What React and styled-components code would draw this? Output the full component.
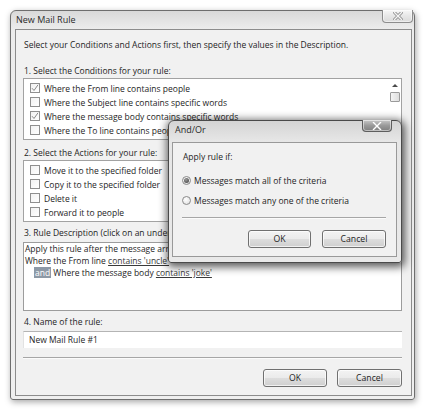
import React from 'react';
import styled, { createGlobalStyle } from 'styled-components';

const GlobalStyle = createGlobalStyle`
  body {
    margin: 0;
    background: #ffffff;
    font-family: "Open Sans", "Noto Sans", sans-serif;
    color: #1e1e1e;
  }
`;

const Desktop = styled.div`
  position: relative;
  width: 427px;
  height: 411px;
  padding: 10px 0 0 10px;
  box-sizing: border-box;
  overflow: hidden;
  font-size: 8.5px;
`;

const Window = styled.div`
  width: 405px;
  height: 390px;
  box-sizing: border-box;
  display: flex;
  flex-direction: column;
  padding: 0 2px 3px 4px;
  border: 1px solid #6e6e6e;
  border-radius: 6px 6px 3px 3px;
  background: linear-gradient(180deg, #d9d9d9 0%, #ececec 18px, #efefef 100%);
  box-shadow: 1px 2px 6px rgba(0, 0, 0, 0.35);
`;

const TitleBar = styled.div`
  height: 18px;
  display: flex;
  justify-content: space-between;
  align-items: flex-start;
`;

const Title = styled.span`
  font-size: 9px;
  line-height: 18px;
  padding-left: ${(p) => p.$indent || 1}px;
  color: #2a2a2a;
`;

const CloseButton = styled.div`
  width: ${(p) => (p.$dark ? 30 : 31)}px;
  height: ${(p) => (p.$dark ? 12 : 13)}px;
  margin-top: -1px;
  margin-right: ${(p) => (p.$dark ? 5 : -1)}px;
  box-sizing: border-box;
  display: flex;
  align-items: center;
  justify-content: center;
  border: 1px solid ${(p) => (p.$dark ? '#5e5e5e' : '#8d8d8d')};
  border-top: none;
  border-radius: 0 0 4px 4px;
  background: ${(p) =>
    p.$dark
      ? 'linear-gradient(180deg, #c9c9c9 0%, #9a9a9a 50%, #7f7f7f 100%)'
      : 'linear-gradient(180deg, #f7f7f7 0%, #e7e7e7 50%, #dadada 100%)'};
  box-shadow: inset 0 0 0 1px rgba(255, 255, 255, 0.5);
`;

const Client = styled.div`
  flex: 1;
  display: flex;
  flex-direction: column;
  padding: 8px 9px 0 7px;
  border: 1px solid #8c8c8c;
  background: #f1f1f1;
`;

const Text = styled.div`
  line-height: 14px;
  height: 14px;
  white-space: nowrap;
  margin-top: ${(p) => p.$top || 0}px;
  padding-left: 1px;
`;

const ListBox = styled.div`
  height: 62px;
  margin-top: ${(p) => p.$top || 0}px;
  box-sizing: border-box;
  display: flex;
  border: 1px solid #a2a2a2;
  background: #ffffff;
`;

const Items = styled.div`
  flex: 1;
  padding: 2px 0 0 6px;
  overflow: hidden;
`;

const Row = styled.div`
  height: 14px;
  display: flex;
  align-items: center;
  gap: 4px;
  white-space: nowrap;
`;

const Box = styled.span`
  width: 10px;
  height: 10px;
  box-sizing: border-box;
  flex: none;
  display: flex;
  align-items: center;
  justify-content: center;
  border: 1px solid #8f8f8f;
  background: linear-gradient(135deg, #f2f2f2, #ffffff);
`;

const ScrollBar = styled.div`
  width: 13px;
  display: flex;
  flex-direction: column;
  align-items: center;
  padding-top: 5px;
`;

const UpArrow = styled.span`
  width: 0;
  height: 0;
  border-left: 3px solid transparent;
  border-right: 3px solid transparent;
  border-bottom: 3px solid #4a4a4a;
`;

const Thumb = styled.span`
  width: 10px;
  height: 10px;
  margin-top: 5px;
  box-sizing: border-box;
  border: 1px solid #9a9a9a;
  border-radius: 1px;
  background: linear-gradient(90deg, #f4f4f4, #dedede);
`;

const Description = styled.div`
  height: 69px;
  margin-top: 2px;
  box-sizing: border-box;
  border: 1px solid #9c9c9c;
  background: #ffffff;
  padding: 0 0 0 1px;
`;

const DescLine = styled.div`
  line-height: 12px;
  white-space: nowrap;
  padding-left: ${(p) => p.$indent || 0}px;
`;

const Link = styled.span`
  text-decoration: underline;
  color: #3a3a3a;
`;

const Selected = styled.span`
  background: #8d99a6;
  color: #ffffff;
  padding: 0 1px;
`;

const NameField = styled.div`
  height: 17px;
  margin-top: 2px;
  box-sizing: border-box;
  padding-left: 5px;
  line-height: 16px;
  border-top: 1px solid #b4b4b4;
  border-left: 1px solid #e2e2e2;
  background: #ffffff;
`;

const Separator = styled.div`
  margin-top: ${(p) => p.$top || 0}px;
  border-top: 1px solid #a6a6a6;
  border-bottom: 1px solid #fbfbfb;
`;

const ButtonRow = styled.div`
  display: flex;
  justify-content: flex-end;
  gap: ${(p) => p.$gap || 10}px;
  margin-top: ${(p) => p.$top || 0}px;
`;

const Button = styled.div`
  width: ${(p) => p.$width || 64}px;
  height: 18px;
  box-sizing: border-box;
  display: flex;
  align-items: center;
  justify-content: center;
  border: 1px solid #707070;
  border-radius: 3px;
  background: linear-gradient(180deg, #f3f3f3 0%, #ebebeb 48%, #dddddd 52%, #cfcfcf 100%);
  box-shadow: inset 0 0 0 1px rgba(255, 255, 255, 0.7);
  font-size: 8.7px;
`;

const Dialog = styled.div`
  position: absolute;
  left: 168px;
  top: 120px;
  width: 234px;
  height: 143px;
  box-sizing: border-box;
  display: flex;
  flex-direction: column;
  padding: 0 4px 5px 3px;
  border: 1px solid #4a4a4a;
  border-radius: 6px 6px 3px 3px;
  background: linear-gradient(180deg, #d4d4d4 0%, #e6e6e6 20px, #e9e9e9 100%);
  box-shadow: 1px 2px 9px 2px rgba(0, 0, 0, 0.65);
`;

const DialogTitleBar = styled(TitleBar)`
  height: 21px;
`;

const DialogClient = styled.div`
  flex: 1;
  display: flex;
  flex-direction: column;
  padding: 7px 10px 0 9px;
  border: 1px solid #999999;
  background: #f1f1f1;
`;

const RadioRow = styled(Row)`
  gap: 2px;
  margin-top: ${(p) => p.$top || 0}px;
`;

const Radio = styled.span`
  width: 9px;
  height: 9px;
  box-sizing: border-box;
  flex: none;
  display: flex;
  align-items: center;
  justify-content: center;
  border: 1px solid #8a8a8a;
  border-radius: 50%;
  background: radial-gradient(circle at 40% 35%, #ffffff, #dcdcdc);
  margin-right: 1px;
`;

const Dot = styled.span`
  width: 5px;
  height: 5px;
  border-radius: 50%;
  background: radial-gradient(circle at 40% 35%, #9a9a9a, #3c3c3c);
`;

const CloseGlyph = ({ color, outline }) => (
  <svg width="10" height="8" viewBox="0 0 10 8">
    {outline && (
      <path d="M1.5 0.5 L8.5 7.5 M8.5 0.5 L1.5 7.5" stroke="#8a8a8a" strokeWidth="3" strokeLinecap="square" />
    )}
    <path d="M1.5 0.5 L8.5 7.5 M8.5 0.5 L1.5 7.5" stroke={color} strokeWidth="1.4" strokeLinecap="square" />
  </svg>
);

const Check = () => (
  <svg width="8" height="8" viewBox="0 0 8 8">
    <polyline points="1,4.2 3,6.5 7,0.8" fill="none" stroke="#8a8a8a" strokeWidth="1" />
  </svg>
);

const Checkbox = ({ checked, label }) => (
  <Row>
    <Box>{checked && <Check />}</Box>
    <span>{label}</span>
  </Row>
);

const conditions = [
  { label: 'Where the From line contains people', checked: true },
  { label: 'Where the Subject line contains specific words' },
  { label: 'Where the message body contains specific words', checked: true },
  { label: 'Where the To line contains people' },
];

const actions = [
  { label: 'Move it to the specified folder' },
  { label: 'Copy it to the specified folder' },
  { label: 'Delete it' },
  { label: 'Forward it to people' },
];

export default function App() {
  return (
    <>
      <GlobalStyle />
      <Desktop>
        <Window>
          <TitleBar>
            <Title>New Mail Rule</Title>
            <CloseButton>
              <CloseGlyph color="#f4f4f4" outline />
            </CloseButton>
          </TitleBar>
          <Client>
            <Text>Select your Conditions and Actions first, then specify the values in the Description.</Text>
            <Text $top={12}>1. Select the Conditions for your rule:</Text>
            <ListBox>
              <Items>
                {conditions.map((c) => (
                  <Checkbox key={c.label} {...c} />
                ))}
              </Items>
              <ScrollBar>
                <UpArrow />
                <Thumb />
              </ScrollBar>
            </ListBox>
            <Text $top={6}>2. Select the Actions for your rule:</Text>
            <ListBox>
              <Items>
                {actions.map((a) => (
                  <Checkbox key={a.label} {...a} />
                ))}
              </Items>
            </ListBox>
            <Text $top={4}>3. Rule Description (click on an underlined value to edit it):</Text>
            <Description>
              <DescLine>Apply this rule after the message arrives</DescLine>
              <DescLine>
                Where the From line <Link>contains 'uncle'</Link>
              </DescLine>
              <DescLine $indent={9}>
                <Selected>and</Selected> Where the message body <Link>contains 'joke'</Link>
              </DescLine>
            </Description>
            <Text $top={4}>4. Name of the rule:</Text>
            <NameField>New Mail Rule #1</NameField>
            <Separator $top={9} />
            <ButtonRow $top={10}>
              <Button>OK</Button>
              <Button $width={65}>Cancel</Button>
            </ButtonRow>
          </Client>
        </Window>

        <Dialog>
          <DialogTitleBar>
            <Title $indent={3}>And/Or</Title>
            <CloseButton $dark>
              <CloseGlyph color="#ffffff" />
            </CloseButton>
          </DialogTitleBar>
          <DialogClient>
            <Text>Apply rule if:</Text>
            <RadioRow $top={9}>
              <Radio>
                <Dot />
              </Radio>
              <span>Messages match all of the criteria</span>
            </RadioRow>
            <RadioRow $top={6}>
              <Radio />
              <span>Messages match any one of the criteria</span>
            </RadioRow>
            <Separator $top={10} />
            <ButtonRow $top={11} $gap={11}>
              <Button $width={63}>OK</Button>
              <Button>Cancel</Button>
            </ButtonRow>
          </DialogClient>
        </Dialog>
      </Desktop>
    </>
  );
}
